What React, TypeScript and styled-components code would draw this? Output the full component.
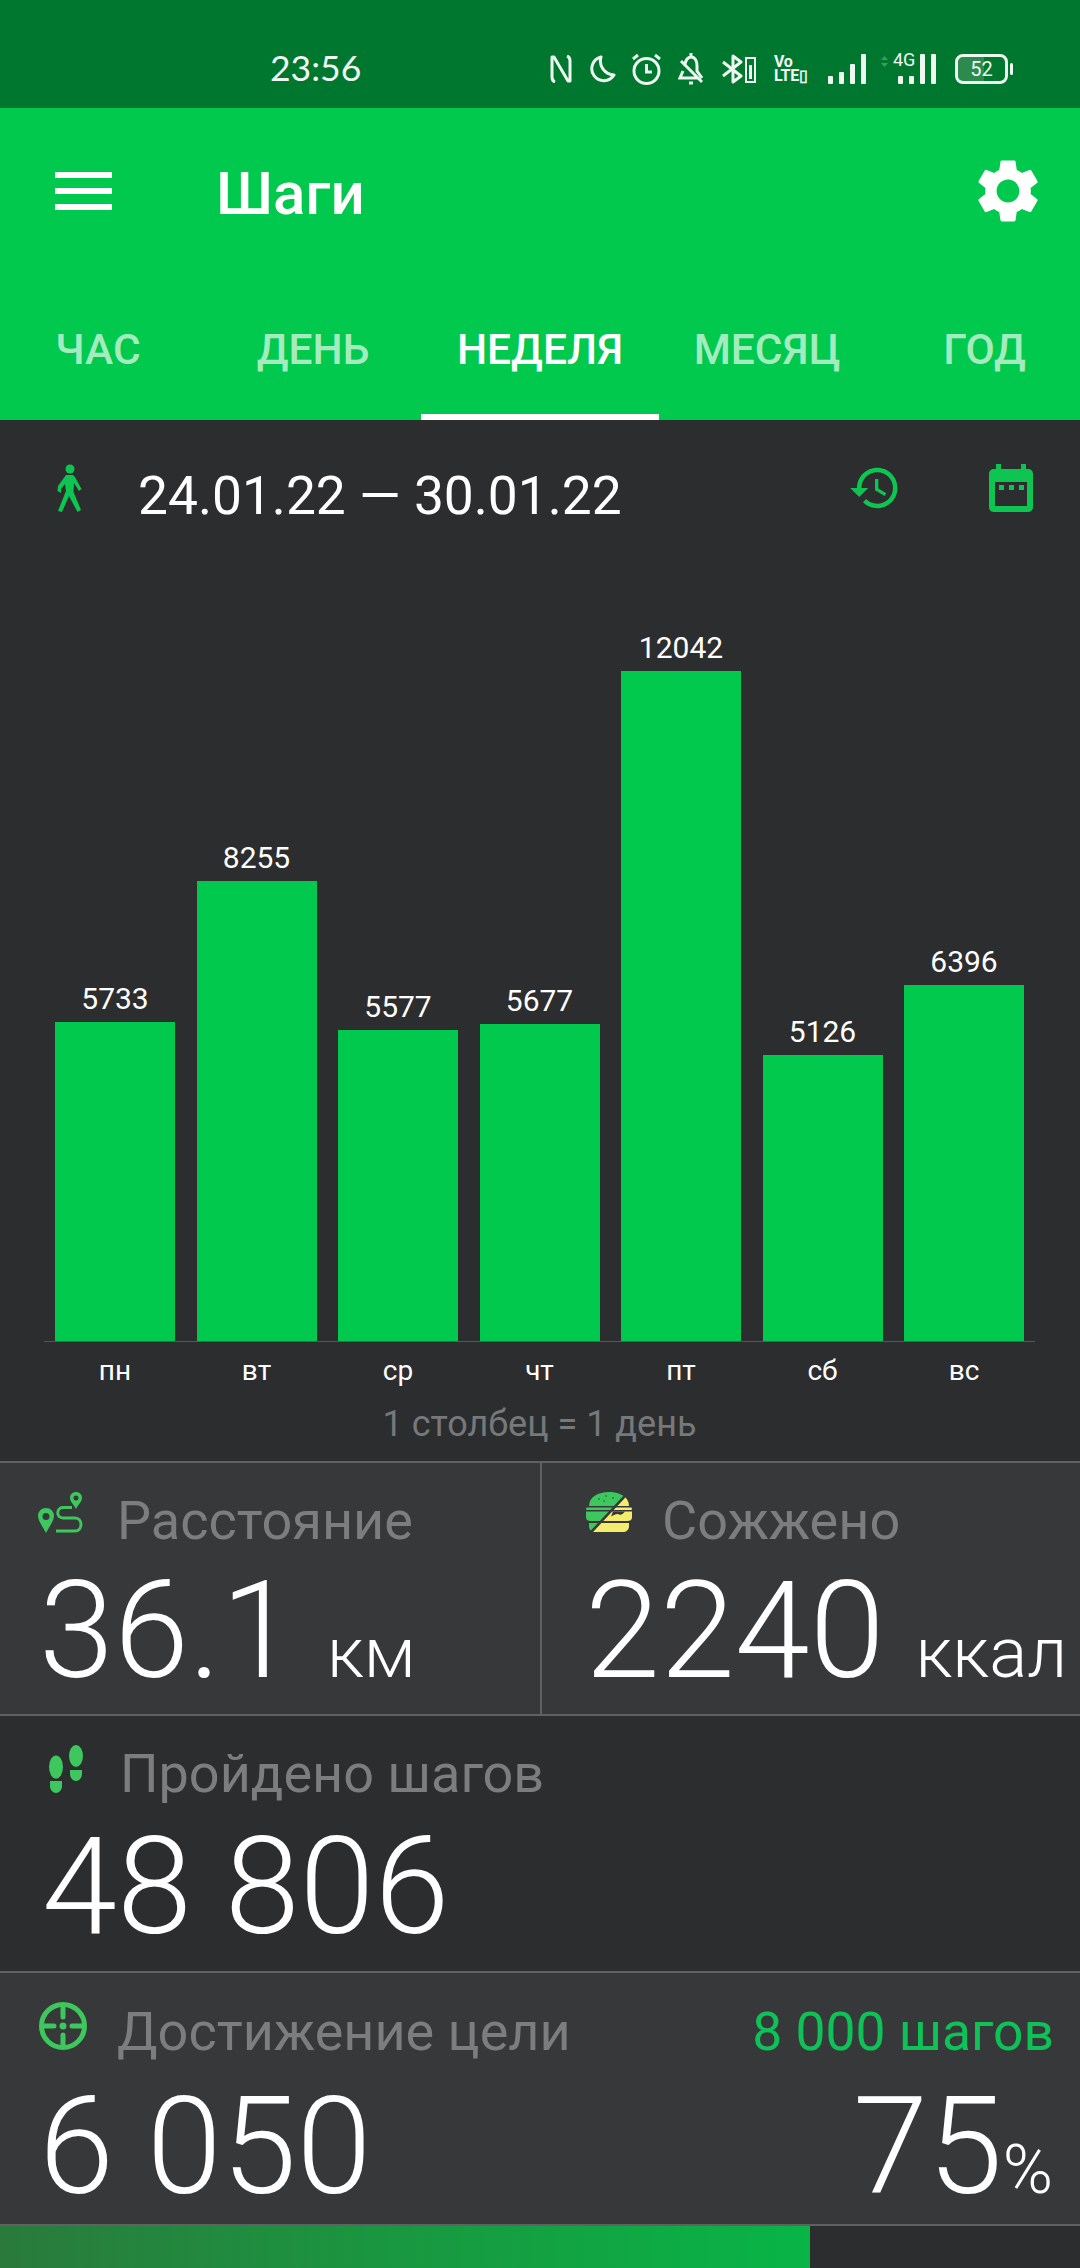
import React from 'react';
import styled, { createGlobalStyle } from 'styled-components';

const Global = createGlobalStyle`
  html, body { margin: 0; padding: 0; background: #2c2d2f; }
  * { box-sizing: border-box; }
  body { font-family: Roboto, "Noto Sans", sans-serif; }
`;

const Page = styled.div`
  width: 1080px;
  height: 2268px;
  overflow: hidden;
  background: #2c2d2f;
  display: flex;
  flex-direction: column;
`;

const StatusBar = styled.div`
  height: 108px;
  background: #00772f;
  color: #f1f8f3;
  display: flex;
  align-items: center;
  padding: 30px 0 0 270px;
`;
const Clock = styled.div`
  width: 100px;
  margin-right: 180px;
  font-size: 35.5px;
  font-family: Lato, Roboto, sans-serif;
  font-weight: 400;
  line-height: 36px;
  margin-top: -3px;
  white-space: nowrap;
`;
const StatusIcons = styled.div`
  display: flex;
  align-items: center;
  height: 40px;
`;
const StatusGlyph = styled.svg<{ $mr: number }>`
  display: block;
  flex: none;
  margin-right: ${p => p.$mr}px;
`;
const VoLte = styled.div`
  width: 36px;
  margin-right: 18px;
  font-size: 16px;
  line-height: 14px;
  font-weight: 700;
  letter-spacing: -0.3px;
  white-space: nowrap;
`;
const FourG = styled.div`
  position: relative;
  width: 58px;
  height: 30px;
  margin-right: 17px;
`;
const FourGText = styled.span`
  position: absolute;
  left: 13px;
  top: -3px;
  font-size: 18px;
  line-height: 18px;
  font-weight: 400;
`;
const Battery = styled.div`
  position: relative;
  width: 53px;
  height: 30px;
  border: 3px solid #eef7f0;
  border-radius: 8px;
  display: flex;
  align-items: center;
  justify-content: center;
  font-size: 20px;
  line-height: 20px;
  background: linear-gradient(90deg, #2b8a4c 55%, transparent 55%);
  background-clip: padding-box;
  &::after {
    content: '';
    position: absolute;
    right: -8px;
    top: 6px;
    width: 3px;
    height: 12px;
    border-radius: 2px;
    background: #eef7f0;
  }
`;

const AppBar = styled.header`
  height: 312px;
  background: #00c94d;
  display: flex;
  flex-direction: column;
`;
const Toolbar = styled.div`
  height: 172px;
  display: flex;
  align-items: center;
  padding: 0 34px 0 55px;
`;
const MenuIcon = styled.svg`
  display: block;
  flex: none;
  margin-top: -7px;
`;
const Title = styled.h1`
  margin: 0 0 0 104px;
  flex: 1;
  font-size: 60px;
  font-weight: 500;
  color: #fff;
  line-height: 64px;
`;
const SettingsIcon = styled.svg`
  display: block;
  flex: none;
  margin-top: -7px;
`;
const Tabs = styled.nav`
  height: 140px;
  display: flex;
`;
const Tab = styled.div<{ $w: number; $pl?: number; $active?: boolean }>`
  width: ${p => p.$w}px;
  padding-left: ${p => p.$pl ?? 0}px;
  padding-top: 4px;
  display: flex;
  align-items: center;
  justify-content: center;
  font-size: 42.5px;
  font-weight: 500;
  color: ${p => (p.$active ? '#fff' : '#a4ecbf')};
  border-bottom: 6px solid ${p => (p.$active ? '#fff' : 'transparent')};
`;

const DateRow = styled.div`
  height: 140px;
  display: flex;
  align-items: center;
  padding: 0 47px 0 57px;
`;
const WalkIcon = styled.svg`
  display: block;
  flex: none;
  margin-top: -4px;
`;
const DateText = styled.div`
  margin-left: 56px;
  margin-top: 12px;
  flex: 1;
  font-size: 53.3px;
  color: #fff;
  line-height: 64px;
`;
const HistoryIcon = styled.svg`
  display: block;
  flex: none;
  margin: -5px 87px 0 0;
`;
const CalendarIcon = styled.svg`
  display: block;
  flex: none;
  margin-top: -5px;
`;

const Chart = styled.div`
  height: 781px;
  display: flex;
  align-items: flex-end;
  gap: 21.5px;
  padding: 0 55px;
`;
const BarColumn = styled.div`
  width: 120px;
  display: flex;
  flex-direction: column;
  align-items: center;
`;
const BarValue = styled.div`
  font-size: 30px;
  line-height: 36px;
  color: #fff;
  margin-bottom: 5px;
`;
const Bar = styled.div`
  width: 100%;
  background: #00c94d;
`;
const Axis = styled.div`
  height: 1px;
  margin: 0 45px 0 44px;
  background: #55565a;
`;
const DayRow = styled.div`
  display: flex;
  gap: 21.5px;
  padding: 0 55px;
  height: 52px;
  align-items: center;
`;
const Day = styled.div`
  width: 120px;
  text-align: center;
  font-size: 28px;
  color: #fff;
  padding-top: 4px;
`;
const ChartNote = styled.div`
  height: 50px;
  text-align: center;
  font-size: 36px;
  color: #77787a;
  line-height: 50px;
  margin-top: 5px;
  padding-right: 1px;
`;
const Spacer = styled.div`
  height: 12px;
`;

const StatRow = styled.section<{ $light?: boolean; $h: number }>`
  height: ${p => p.$h}px;
  border-top: 2px solid #606163;
  background: ${p => (p.$light ? '#37383a' : '#2c2d2f')};
  display: flex;
`;
const StatCell = styled.div<{ $divider?: boolean; $w?: number }>`
  width: ${p => (p.$w ? `${p.$w}px` : 'auto')};
  flex: ${p => (p.$w ? 'none' : 1)};
  border-right: ${p => (p.$divider ? '2px solid #606163' : 'none')};
  min-width: 0;
`;
const StatHead = styled.div<{ $pl: number; $top: number; $h: number }>`
  display: flex;
  align-items: flex-start;
  padding: ${p => p.$top}px 26px 0 ${p => p.$pl}px;
  height: ${p => p.$h}px;
`;
const StatIcon = styled.svg<{ $mr: number; $up: number }>`
  display: block;
  flex: none;
  margin-right: ${p => p.$mr}px;
  margin-top: -${p => p.$up}px;
`;
const StatLabel = styled.div<{ $flex?: boolean }>`
  font-size: 54px;
  line-height: 58px;
  color: #7c7d7f;
  white-space: nowrap;
  flex: ${p => (p.$flex ? 1 : 'none')};
`;
const GoalLabel = styled.div`
  font-size: 53.4px;
  line-height: 58px;
  color: #0fc257;
  white-space: nowrap;
`;
const ValueRow = styled.div<{ $pl: number }>`
  display: flex;
  align-items: baseline;
  justify-content: space-between;
  padding: 0 27px 0 ${p => p.$pl}px;
  color: #fff;
  white-space: nowrap;
`;
const BigNum = styled.span`
  font-size: 135px;
  line-height: 110px;
  font-weight: 300;
`;
const Unit = styled.span`
  font-size: 71px;
  line-height: 68px;
  font-weight: 300;
  margin-left: 31px;
`;
const Percent = styled.span`
  font-size: 68px;
  line-height: 68px;
  font-weight: 300;
`;
const ProgressTrack = styled.div`
  flex: 1;
  border-top: 2px solid #606163;
  background: #2c2d2f;
`;
const ProgressFill = styled.div`
  height: 100%;
  background: linear-gradient(90deg, #2a7a3b, #08b546);
`;

const bars = [
  { v: 5733, d: 'пн', h: 319 },
  { v: 8255, d: 'вт', h: 460 },
  { v: 5577, d: 'ср', h: 311 },
  { v: 5677, d: 'чт', h: 317 },
  { v: 12042, d: 'пт', h: 670 },
  { v: 5126, d: 'сб', h: 286 },
  { v: 6396, d: 'вс', h: 356 },
];

const BurgerShape = () => (
  <>
    <path d="M3 14 C3 5 12 0 23 0 C34 0 43 5 43 14 Z" />
    <rect x="0" y="15.500" width="46" height="2.500" rx="1.250" />
    <path d="M0 19.500 H46 V25 C46 28 44 29 41 29 H5 C2 29 0 28 0 25 Z" />
    <path d="M3 31 H43 V34 C43 38 40 40 37 40 H9 C6 40 3 38 3 34 Z" />
  </>
);

export default function App() {
  return (
    <Page>
      <Global />
      <StatusBar>
        <Clock>23:56</Clock>
        <StatusIcons>
          <StatusGlyph $mr={18} width="22" height="28" viewBox="0 0 22 28" fill="none" stroke="#eef7f0" strokeWidth="3">
            <path d="M5 27 Q2 26 2 22 V2 H4 L18 26 H20 V6 Q20 2 17 1" strokeLinejoin="round" />
          </StatusGlyph>
          <StatusGlyph $mr={15} width="26" height="28" viewBox="0 0 26 28" fill="none" stroke="#eef7f0" strokeWidth="3">
            <path d="M11 2 A12 12 0 1 0 24 20 A14 14 0 0 1 11 2 Z" strokeLinejoin="round" />
          </StatusGlyph>
          <StatusGlyph $mr={16} width="31" height="32" viewBox="0 0 31 32" fill="none" stroke="#eef7f0" strokeWidth="3">
            <circle cx="15.5" cy="18" r="12.5" />
            <path d="M15.5 11 V19 H21 M2 6 L7 2 M29 6 L24 2" />
          </StatusGlyph>
          <StatusGlyph $mr={17} width="26" height="32" viewBox="0 0 26 32" fill="none" stroke="#eef7f0" strokeWidth="3">
            <path d="M7 13 C7 7 10 4 13 4 C17 4 19 8 19 13 V18 L24 25 M5 18 L2 25 H20 M3 8 L24 29" />
            <path d="M11 30 H15 M13 0 V3" />
          </StatusGlyph>
          <StatusGlyph $mr={17} width="36" height="30" viewBox="0 0 36 30" fill="none" stroke="#eef7f0" strokeWidth="3">
            <path d="M2 8 L20 22 L12 28 V2 L20 8 L2 22" strokeLinejoin="round" />
            <rect x="25" y="4" width="9" height="24" strokeWidth="2" />
            <rect x="28" y="11" width="3" height="14" fill="#eef7f0" stroke="none" />
          </StatusGlyph>
          <VoLte>
            Vo
            <br />
            LTE▯
          </VoLte>
          <StatusGlyph $mr={14} width="38" height="30" viewBox="0 0 38 30" fill="#eef7f0">
            <rect x="0" y="22" width="5" height="8" rx="1" />
            <rect x="11" y="18" width="5" height="12" rx="1" />
            <rect x="22" y="10" width="5" height="20" rx="1" />
            <rect x="33" y="0" width="5" height="30" rx="1" />
          </StatusGlyph>
          <FourG>
            <FourGText>4G</FourGText>
            <svg width="58" height="30" viewBox="0 0 58 30" fill="#eef7f0">
              <path d="M1 6 L4.5 2 L8 6 Z M1 9 L4.5 13 L8 9 Z" fill="#3f9c61" />
              <rect x="18" y="22" width="5" height="8" rx="1" />
              <rect x="29" y="22" width="5" height="8" rx="1" />
              <rect x="40" y="0" width="5" height="30" rx="1" />
              <rect x="51" y="0" width="5" height="30" rx="1" />
            </svg>
          </FourG>
          <Battery>52</Battery>
        </StatusIcons>
      </StatusBar>

      <AppBar>
        <Toolbar>
          <MenuIcon width="57" height="38" viewBox="0 0 57 38" fill="#fff">
            <rect y="0" width="57" height="6" />
            <rect y="16" width="57" height="6" />
            <rect y="32" width="57" height="6" />
          </MenuIcon>
          <Title>Шаги</Title>
          <SettingsIcon width="76" height="76" viewBox="0 0 24 24" fill="#fff">
            <path d="M19.14 12.94c.04-.3.06-.61.06-.94 0-.32-.02-.64-.07-.94l2.03-1.58c.18-.14.23-.41.12-.61l-1.92-3.32c-.12-.22-.37-.29-.59-.22l-2.39.96c-.5-.38-1.03-.7-1.62-.94l-.36-2.54c-.04-.24-.24-.41-.48-.41h-3.84c-.24 0-.43.17-.47.41l-.36 2.54c-.59.24-1.13.57-1.62.94l-2.39-.96c-.22-.08-.47 0-.59.22L2.74 8.87c-.12.21-.08.47.12.61l2.03 1.58c-.05.3-.09.63-.09.94s.02.64.07.94l-2.03 1.58c-.18.14-.23.41-.12.61l1.92 3.32c.12.22.37.29.59.22l2.39-.96c.5.38 1.03.7 1.62.94l.36 2.54c.05.24.24.41.48.41h3.84c.24 0 .44-.17.47-.41l.36-2.54c.59-.24 1.13-.56 1.62-.94l2.39.96c.22.08.47 0 .59-.22l1.92-3.32c.12-.22.07-.47-.12-.61l-2.01-1.58zM12 15.6c-1.98 0-3.6-1.62-3.6-3.6s1.62-3.6 3.6-3.6 3.6 1.62 3.6 3.6-1.62 3.6-3.6 3.6z" />
          </SettingsIcon>
        </Toolbar>
        <Tabs>
          <Tab $w={196}>ЧАС</Tab>
          <Tab $w={225} $pl={9}>ДЕНЬ</Tab>
          <Tab $w={238} $active>НЕДЕЛЯ</Tab>
          <Tab $w={216}>МЕСЯЦ</Tab>
          <Tab $w={205} $pl={14}>ГОД</Tab>
        </Tabs>
      </AppBar>

      <DateRow>
        <WalkIcon width="25" height="48" viewBox="0 0 25 48" fill="#0fc552">
          <circle cx="13" cy="5" r="4.5" />
          <path d="M9 11 H16 L18 13 L24.5 25 L22 27 L17 19 L16.5 28 L24 46 L20.5 48 L12 32 L5 48 L1 47 L9 27 L8 20 L4 25 L4 29 L0.5 27 L1 22 Z" />
        </WalkIcon>
        <DateText>24.01.22 — 30.01.22</DateText>
        <HistoryIcon width="54" height="54" viewBox="0 0 24 24" fill="#0fc552">
          <path d="M13 3c-4.97 0-9 4.03-9 9H1l3.89 3.89.07.14L9 12H6c0-3.87 3.13-7 7-7s7 3.13 7 7-3.13 7-7 7c-1.93 0-3.68-.79-4.94-2.06l-1.42 1.42C8.27 19.99 10.51 21 13 21c4.97 0 9-4.03 9-9s-4.03-9-9-9zm-1 5v5l4.28 2.54.72-1.21-3.5-2.08V8H12z" />
        </HistoryIcon>
        <CalendarIcon width="44" height="48" viewBox="0 0 44 48" fill="#0fc552">
          <path fillRule="evenodd" d="M7 0 H12 V5 H32 V0 H37 V5 H39 C42 5 44 7 44 10 V43 C44 46 42 48 39 48 H5 C2 48 0 46 0 43 V10 C0 7 2 5 5 5 H7 Z M6 18 V42 H38 V18 Z" />
          <rect x="10" y="21" width="5" height="5" />
          <rect x="20" y="21" width="5" height="5" />
          <rect x="30" y="21" width="5" height="5" />
        </CalendarIcon>
      </DateRow>

      <Chart>
        {bars.map(b => (
          <BarColumn key={b.d}>
            <BarValue>{b.v}</BarValue>
            <Bar style={{ height: b.h }} />
          </BarColumn>
        ))}
      </Chart>
      <Axis />
      <DayRow>
        {bars.map(b => (
          <Day key={b.d}>{b.d}</Day>
        ))}
      </DayRow>
      <ChartNote>1 столбец = 1 день</ChartNote>
      <Spacer />

      <StatRow $light $h={253}>
        <StatCell $divider $w={542}>
          <StatHead $pl={38} $top={29} $h={113}>
            <StatIcon $mr={31} $up={0} width="48" height="42" viewBox="0 0 48 42" fill="none">
              <path fillRule="evenodd" fill="#3dc75c" d="M8 16 C3.5 16 0 19.500 0 24 C0 29 5 35 8 41 C11 35 16 29 16 24 C16 19.500 12.500 16 8 16 Z M8 21 A3.500 3.500 0 1 1 8 28 A3.500 3.500 0 1 1 8 21 Z" />
              <path fillRule="evenodd" fill="#3dc75c" d="M38 0 C34.500 0 32 2.500 32 6 C32 9.500 36 13 38 17 C40 13 44 9.500 44 6 C44 2.500 41.500 0 38 0 Z M38 3.500 A2.500 2.500 0 1 1 38 8.500 A2.500 2.500 0 1 1 38 3.500 Z" />
              <path stroke="#3dc75c" strokeWidth="3" d="M34 15.500 H25 C18 15.500 18 26 25 26 H37 C45 26 45 39 37 39 H18" />
            </StatIcon>
            <StatLabel>Расстояние</StatLabel>
          </StatHead>
          <ValueRow $pl={39}>
            <span>
              <BigNum>36.1</BigNum>
              <Unit>км</Unit>
            </span>
          </ValueRow>
        </StatCell>
        <StatCell>
          <StatHead $pl={44} $top={29} $h={113}>
            <StatIcon $mr={30} $up={0} width="46" height="40" viewBox="0 0 46 40">
              <defs>
                <clipPath id="burger-left">
                  <path d="M0 0 H41 L3.500 40 H0 Z" />
                </clipPath>
                <clipPath id="burger-right">
                  <path d="M44.500 0 H46 V40 H7 Z" />
                </clipPath>
              </defs>
              <g clipPath="url(#burger-left)" fill="#3dc75c">
                <BurgerShape />
              </g>
              <g clipPath="url(#burger-right)" fill="#f4ec6b">
                <BurgerShape />
              </g>
              <path fill="#37383a" d="M27 19.500 H39 C37 22 35 23.500 33 22.500 C31 21.500 29 22.500 25 24.500 Z" />
              <g fill="#1f8a3d">
                <circle cx="13" cy="7" r="1" />
                <circle cx="20" cy="4" r="1" />
                <circle cx="27" cy="6" r="1" />
                <circle cx="18" cy="9" r="1" />
              </g>
            </StatIcon>
            <StatLabel>Сожжено</StatLabel>
          </StatHead>
          <ValueRow $pl={43}>
            <span>
              <BigNum>2240</BigNum>
              <Unit>ккал</Unit>
            </span>
          </ValueRow>
        </StatCell>
      </StatRow>

      <StatRow $h={257}>
        <StatCell>
          <StatHead $pl={49} $top={29} $h={116}>
            <StatIcon $mr={37} $up={0} width="34" height="48" viewBox="0 0 34 48" fill="#3dc75c">
              <ellipse cx="7" cy="22" rx="7" ry="11.500" />
              <path d="M1 36 H13 V41 C13 45 10 48 7 48 C4 48 1 45 1 41 Z" />
              <ellipse cx="27" cy="11" rx="7" ry="11" />
              <path d="M21 25 H33 V29 C33 33 30 36 27 36 C24 36 21 33 21 29 Z" />
            </StatIcon>
            <StatLabel>Пройдено шагов</StatLabel>
          </StatHead>
          <ValueRow $pl={42}>
            <BigNum>48 806</BigNum>
          </ValueRow>
        </StatCell>
      </StatRow>

      <StatRow $light $h={253}>
        <StatCell>
          <StatHead $pl={39} $top={30} $h={119}>
            <StatIcon $mr={30} $up={1} width="48" height="48" viewBox="0 0 48 48" fill="none" stroke="#3dc75c" strokeWidth="5">
              <circle cx="24" cy="24" r="21.500" />
              <path d="M24 5 V15 M24 33 V43 M5 24 H15 M33 24 H43" strokeLinecap="round" />
              <circle cx="24" cy="24" r="3.500" fill="#3dc75c" stroke="none" />
            </StatIcon>
            <StatLabel $flex>Достижение цели</StatLabel>
            <GoalLabel>8 000 шагов</GoalLabel>
          </StatHead>
          <ValueRow $pl={39}>
            <BigNum>6 050</BigNum>
            <span>
              <BigNum>75</BigNum>
              <Percent>%</Percent>
            </span>
          </ValueRow>
        </StatCell>
      </StatRow>

      <ProgressTrack>
        <ProgressFill style={{ width: `${(810 / 1080) * 100}%` }} />
      </ProgressTrack>
    </Page>
  );
}
